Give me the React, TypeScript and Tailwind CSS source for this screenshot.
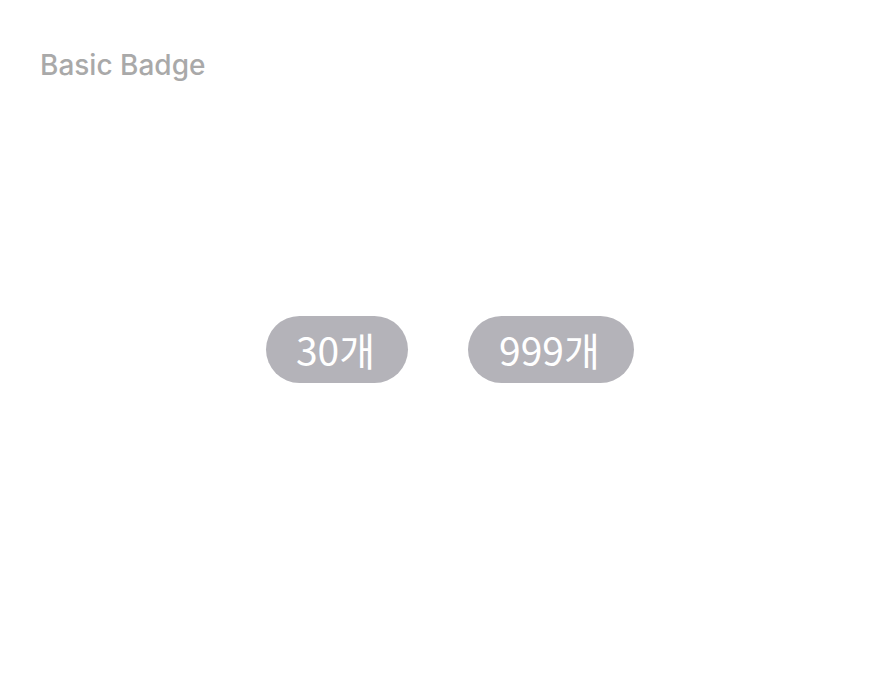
import React from "react";

function Badge({ t, w }: { t: string; w: string }) {
  return (
    <span
      className={`flex h-[67px] items-center justify-center rounded-full bg-[#b4b3b9] pr-[3px] text-[39px] leading-none text-white [font-family:'Noto_Sans_CJK_KR',sans-serif] ${w}`}
    >
      {t}
    </span>
  );
}

export default function App() {
  return (
    <div className="grid h-[698px] w-full bg-white">
      <div className="[grid-area:1/1] px-10 pt-[46px]">
        <h1 className="text-[28px] leading-[38px] font-medium text-[#a9a9a9] [font-family:Inter,'Noto_Sans',sans-serif]">
          Basic Badge
        </h1>
      </div>
      <div className="[grid-area:1/1] flex items-center justify-center gap-[60px] pl-6">
        <Badge t="30개" w="w-[142px]" />
        <Badge t="999개" w="w-[166px]" />
      </div>
    </div>
  );
}
